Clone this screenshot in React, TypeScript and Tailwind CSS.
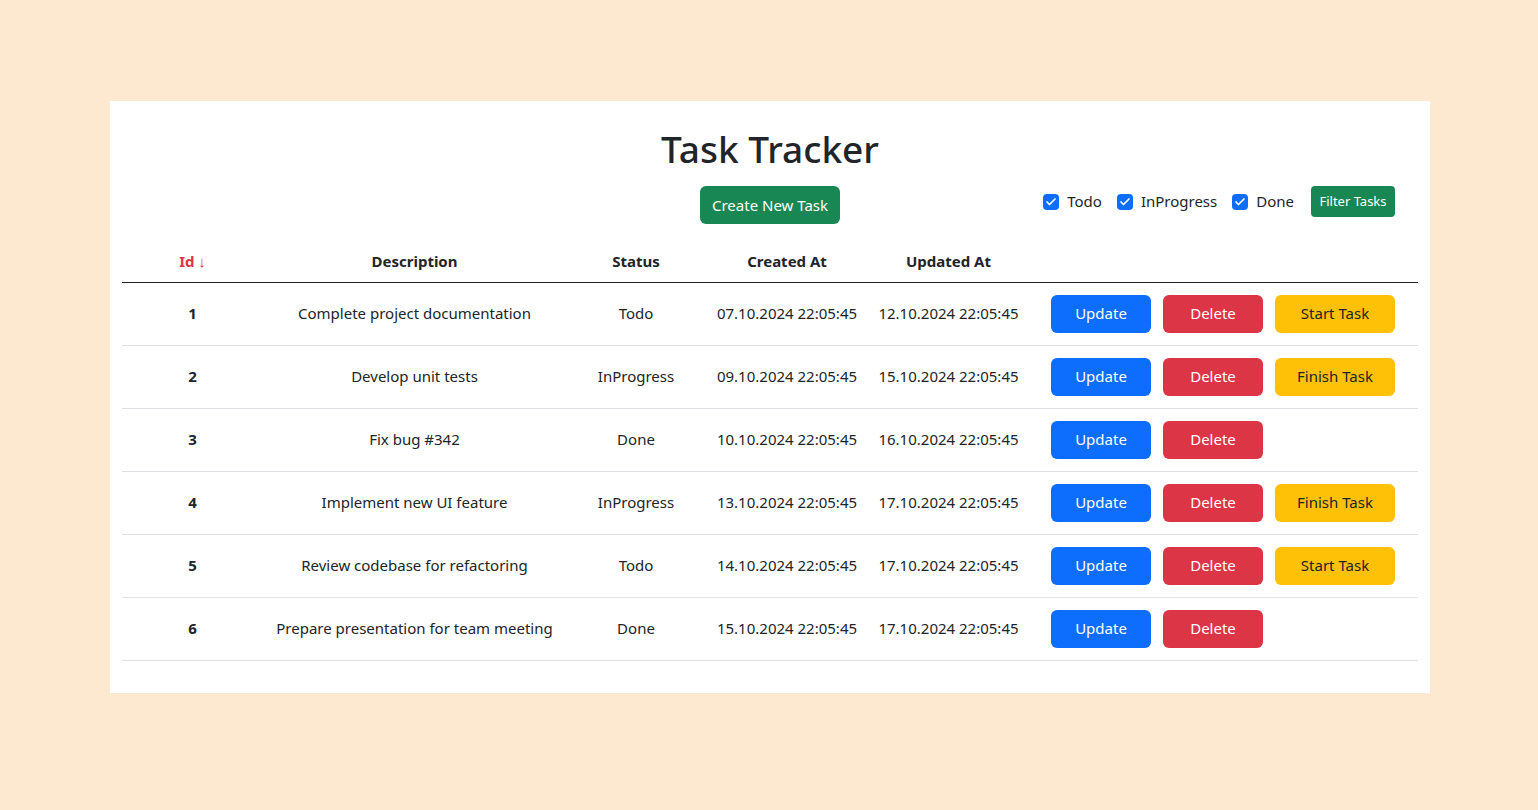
import { Check } from "lucide-react";

type Task = {
  id: number;
  description: string;
  status: "Todo" | "InProgress" | "Done";
  createdAt: string;
  updatedAt: string;
};

const tasks: Task[] = [
  { id: 1, description: "Complete project documentation", status: "Todo", createdAt: "07.10.2024 22:05:45", updatedAt: "12.10.2024 22:05:45" },
  { id: 2, description: "Develop unit tests", status: "InProgress", createdAt: "09.10.2024 22:05:45", updatedAt: "15.10.2024 22:05:45" },
  { id: 3, description: "Fix bug #342", status: "Done", createdAt: "10.10.2024 22:05:45", updatedAt: "16.10.2024 22:05:45" },
  { id: 4, description: "Implement new UI feature", status: "InProgress", createdAt: "13.10.2024 22:05:45", updatedAt: "17.10.2024 22:05:45" },
  { id: 5, description: "Review codebase for refactoring", status: "Todo", createdAt: "14.10.2024 22:05:45", updatedAt: "17.10.2024 22:05:45" },
  { id: 6, description: "Prepare presentation for team meeting", status: "Done", createdAt: "15.10.2024 22:05:45", updatedAt: "17.10.2024 22:05:45" },
];

function CheckItem({ label }: { label: string }) {
  return (
    <label className="flex items-center gap-2">
      <span className="w-4 h-4 rounded-[4px] bg-[#0d6efd] flex items-center justify-center">
        <Check className="w-3 h-3 text-white" strokeWidth={3.5} />
      </span>
      <span className="-mt-px">{label}</span>
    </label>
  );
}

export default function App() {
  return (
    <div className="min-h-screen bg-[#fce9cf] pt-[101px] pl-[110px] pr-[108px] text-[#212529] font-['Noto_Sans',sans-serif] text-[15px]">
      <div className="bg-white px-3 pt-6 pb-8">
        <h1 className="text-center text-[37px] leading-[48px] font-medium">Task Tracker</h1>

        {/* toolbar */}
        <div className="relative mt-[13px] h-[38px] flex justify-center">
          <button className="h-[38px] px-3 rounded-md bg-[#198754] text-white">Create New Task</button>
          <div className="absolute right-[23px] top-0 flex items-center gap-[15px] h-[31px]">
            <CheckItem label="Todo" />
            <CheckItem label="InProgress" />
            <CheckItem label="Done" />
            <button className="ml-[2px] w-[84px] h-[31px] rounded-[4px] bg-[#198754] text-white text-[13px]">Filter Tasks</button>
          </div>
        </div>

        <table className="mt-4 w-full table-fixed border-collapse">
          <thead>
            <tr className="h-[42px] border-b border-[#212529] font-bold">
              <th className="w-[141px] text-[#dc3545]">Id ↓</th>
              <th className="w-[303px]">Description</th>
              <th className="w-[140px]">Status</th>
              <th className="w-[162px]">Created At</th>
              <th className="w-[161px]">Updated At</th>
              <th></th>
            </tr>
          </thead>
          <tbody>
            {tasks.map((t) => (
              <tr key={t.id} className="h-[63px] border-b border-[#dee2e6] text-center">
                <td className="font-bold">{t.id}</td>
                <td>{t.description}</td>
                <td>{t.status}</td>
                <td>{t.createdAt}</td>
                <td>{t.updatedAt}</td>
                <td className="pl-[22px]">
                  <div className="flex gap-3">
                    <button className="w-[100px] h-[38px] rounded-md bg-[#0d6efd] text-white">Update</button>
                    <button className="w-[100px] h-[38px] rounded-md bg-[#dc3545] text-white">Delete</button>
                    {t.status === "Todo" && (
                      <button className="w-[120px] h-[38px] rounded-md bg-[#ffc107] text-[#212529]">Start Task</button>
                    )}
                    {t.status === "InProgress" && (
                      <button className="w-[120px] h-[38px] rounded-md bg-[#ffc107] text-[#212529]">Finish Task</button>
                    )}
                  </div>
                </td>
              </tr>
            ))}
          </tbody>
        </table>
      </div>
    </div>
  );
}
